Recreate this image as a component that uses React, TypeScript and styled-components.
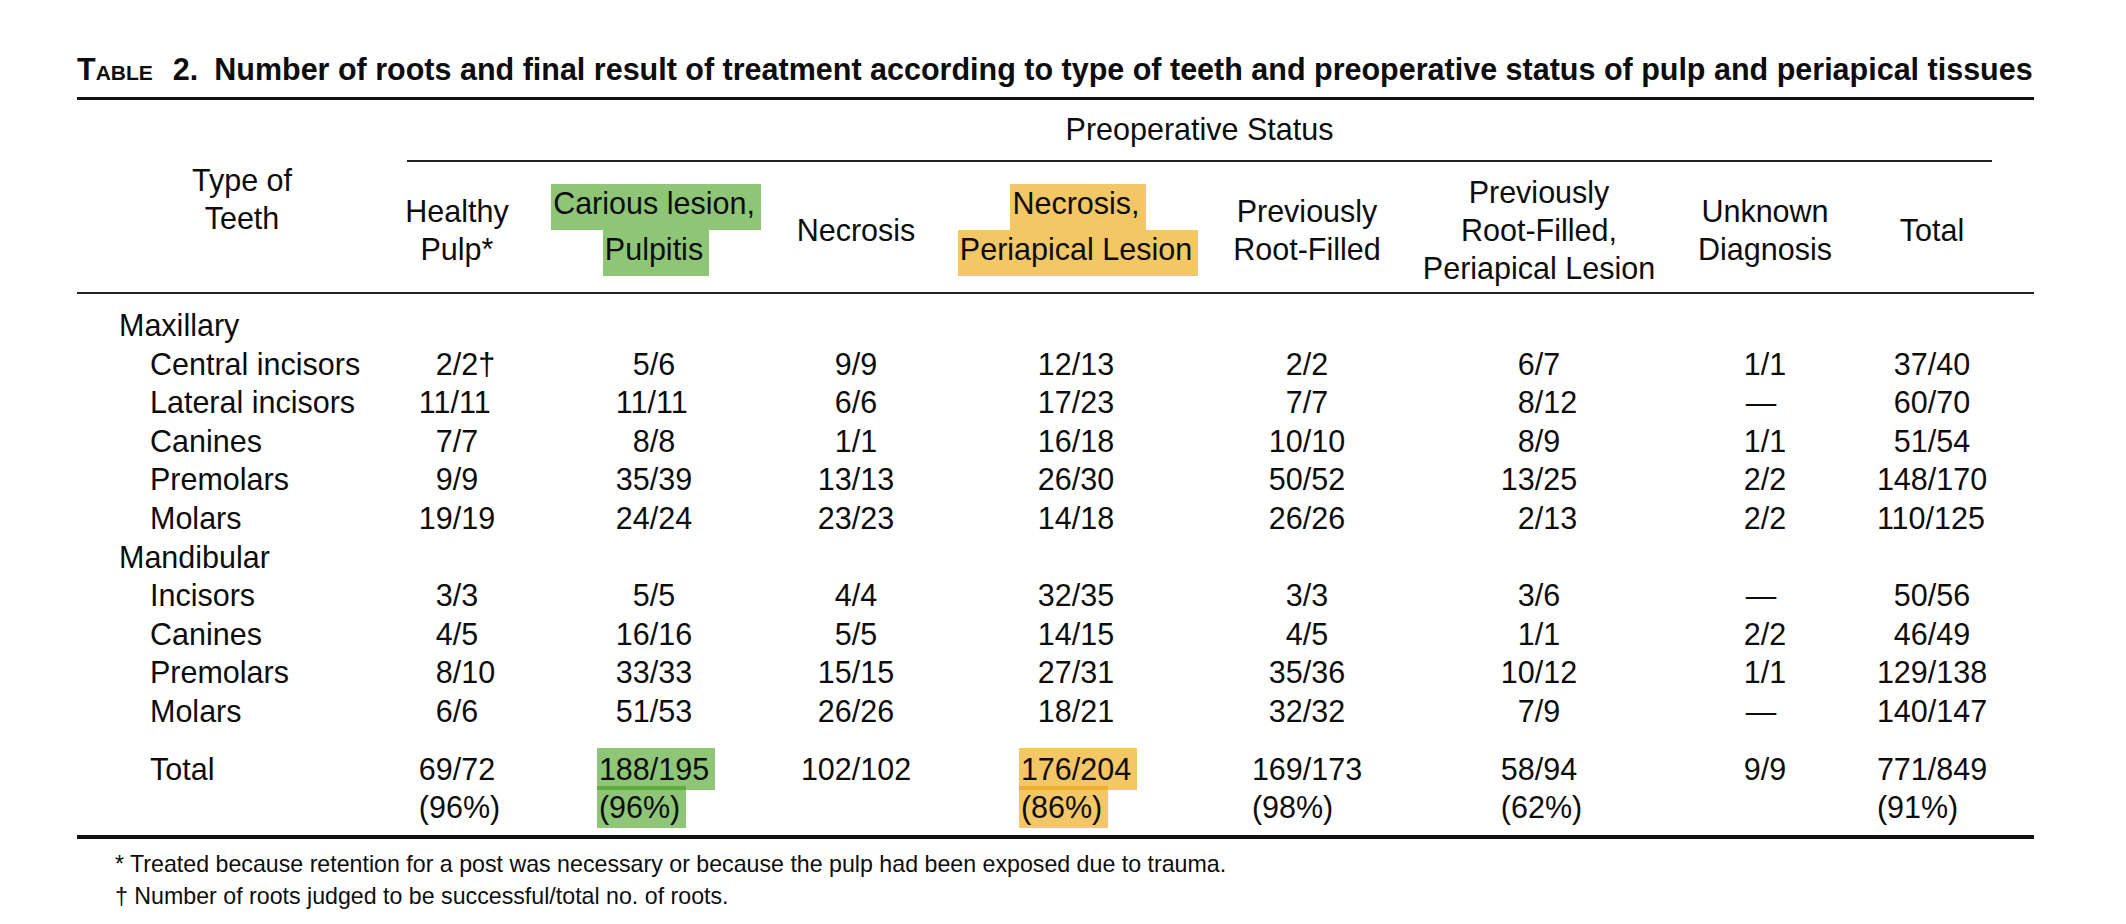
import React from 'react';
import styled, { createGlobalStyle } from 'styled-components';

const GlobalStyle = createGlobalStyle`
  html, body {
    margin: 0;
    padding: 0;
    background: #fff;
  }
  body {
    font-family: "Liberation Sans", Arial, Helvetica, sans-serif;
    color: #0d0d0d;
  }
`;

// label | 8 status columns | right gutter
const COLS = '313px 134px 260px 144px 296px 166px 298px 154px 180px 12px';

const Page = styled.div`
  width: 1957px;
  padding: 50px 0 0 77px;
`;

const Title = styled.h1`
  margin: 0;
  font-size: 30.5px;
  line-height: 38px;
  font-weight: 700;
  white-space: nowrap;
`;

const TableWord = styled.span`
  font-variant: small-caps;
  margin-right: 20px;
`;

const TableNo = styled.span`
  margin-right: 16px;
`;

const Table = styled.div`
  margin-top: 9px;
  border-top: 3px solid #111;
  border-bottom: 4px solid #111;
  font-size: 30.5px;
`;

const Grid = styled.div`
  display: grid;
  grid-template-columns: ${COLS};
`;

const Head = styled(Grid)`
  border-bottom: 2px solid #222;
  line-height: 38px;
`;

const TypeHead = styled.div`
  grid-column: 1;
  grid-row: 1 / span 2;
  display: flex;
  flex-direction: column;
  align-items: center;
  justify-content: center;
  padding: 6px 0 0 17px;
`;

const Spanner = styled.div`
  grid-column: 2 / -1;
  grid-row: 1;
  margin: 0 42px 0 17px;
  padding: 10px 0 12px;
  border-bottom: 2px solid #222;
  text-align: center;
`;

const HeadCell = styled.div`
  grid-row: 2;
  height: 130px;
  box-sizing: border-box;
  padding-top: 6px;
  display: flex;
  flex-direction: column;
  align-items: center;
  justify-content: center;
  white-space: nowrap;
`;

const Line = styled.div`
  display: flex;
  justify-content: center;
`;

const Mark = styled.span<{ $tone: 'green' | 'orange'; $tall?: boolean }>`
  background: ${p => (p.$tone === 'green' ? 'rgba(60, 155, 20, 0.58)' : 'rgba(235, 160, 0, 0.6)')};
  padding: ${p => (p.$tall ? '0 6px 8px 2px' : '4px 6px 4px 2px')};
  margin: 0 -6px 0 -2px;
`;

const Body = styled(Grid)`
  padding-top: 12px;
  grid-auto-rows: 38.6px;
  line-height: 38.6px;
`;

const Group = styled.div`
  grid-column: 1 / -1;
  padding-left: 42px;
`;

const Label = styled.div`
  grid-column: 1;
  padding-left: 73px;
  white-space: nowrap;
`;

const Value = styled.div<{ $lead: number }>`
  padding-left: calc(50% - ${p => (p.$lead * 0.556 + 0.139).toFixed(3)}em);
  white-space: nowrap;
`;

const Dash = styled.div`
  text-align: center;
  padding-right: 8px;
`;

const Totals = styled(Grid)`
  padding: 19px 0 8px;
  line-height: 38.6px;
`;

const Stack = styled.div`
  display: inline-flex;
  flex-direction: column;
  align-items: flex-start;
`;

const Notes = styled.div`
  margin-top: 9px;
  padding-left: 38px;
  font-size: 23.2px;
  line-height: 32px;
  white-space: nowrap;
`;

const heads: { lines: string[]; tone?: 'green' | 'orange' }[] = [
  { lines: ['Healthy', 'Pulp*'] },
  { lines: ['Carious lesion,', 'Pulpitis'], tone: 'green' },
  { lines: ['Necrosis'] },
  { lines: ['Necrosis,', 'Periapical Lesion'], tone: 'orange' },
  { lines: ['Previously', 'Root-Filled'] },
  { lines: ['Previously', 'Root-Filled,', 'Periapical Lesion'] },
  { lines: ['Unknown', 'Diagnosis'] },
  { lines: ['Total'] },
];

type Section = { group: string; rows: [string, string[]][] };

const sections: Section[] = [
  {
    group: 'Maxillary',
    rows: [
      ['Central incisors', ['2/2†', '5/6', '9/9', '12/13', '2/2', '6/7', '1/1', '37/40']],
      ['Lateral incisors', ['11/11', '11/11', '6/6', '17/23', '7/7', '8/12', '—', '60/70']],
      ['Canines', ['7/7', '8/8', '1/1', '16/18', '10/10', '8/9', '1/1', '51/54']],
      ['Premolars', ['9/9', '35/39', '13/13', '26/30', '50/52', '13/25', '2/2', '148/170']],
      ['Molars', ['19/19', '24/24', '23/23', '14/18', '26/26', '2/13', '2/2', '110/125']],
    ],
  },
  {
    group: 'Mandibular',
    rows: [
      ['Incisors', ['3/3', '5/5', '4/4', '32/35', '3/3', '3/6', '—', '50/56']],
      ['Canines', ['4/5', '16/16', '5/5', '14/15', '4/5', '1/1', '2/2', '46/49']],
      ['Premolars', ['8/10', '33/33', '15/15', '27/31', '35/36', '10/12', '1/1', '129/138']],
      ['Molars', ['6/6', '51/53', '26/26', '18/21', '32/32', '7/9', '—', '140/147']],
    ],
  },
];

const totals: { value: string; pct?: string; tone?: 'green' | 'orange' }[] = [
  { value: '69/72', pct: '(96%)' },
  { value: '188/195', pct: '(96%)', tone: 'green' },
  { value: '102/102' },
  { value: '176/204', pct: '(86%)', tone: 'orange' },
  { value: '169/173', pct: '(98%)' },
  { value: '58/94', pct: '(62%)' },
  { value: '9/9' },
  { value: '771/849', pct: '(91%)' },
];

const Cell = ({ v }: { v: string }) =>
  v === '—' ? <Dash>—</Dash> : <Value $lead={v.indexOf('/')}>{v}</Value>;

const TotalCell = ({ value, pct, tone }: (typeof totals)[number]) => {
  const wrap = (s: string) => (tone ? <Mark $tone={tone}>{s}</Mark> : s);
  return (
    <Value $lead={value.indexOf('/')}>
      <Stack>
        <span>{wrap(value)}</span>
        {pct && <span>{wrap(pct)}</span>}
      </Stack>
    </Value>
  );
};

export default function App() {
  return (
    <Page>
      <GlobalStyle />
      <Title>
        <TableWord>Table</TableWord>
        <TableNo>2.</TableNo>
        Number of roots and final result of treatment according to type of teeth and preoperative
        status of pulp and periapical tissues
      </Title>
      <Table>
        <Head>
          <TypeHead>
            <Line>Type of</Line>
            <Line>Teeth</Line>
          </TypeHead>
          <Spanner>Preoperative Status</Spanner>
          {heads.map((h, i) => (
            <HeadCell key={i} style={{ gridColumn: i + 2 }}>
              {h.lines.map(l => (
                <Line key={l}>
                  {h.tone ? (
                    <Mark $tone={h.tone} $tall>
                      {l}
                    </Mark>
                  ) : (
                    l
                  )}
                </Line>
              ))}
            </HeadCell>
          ))}
        </Head>
        <Body>
          {sections.map(s => (
            <React.Fragment key={s.group}>
              <Group>{s.group}</Group>
              {s.rows.map(([label, values]) => (
                <React.Fragment key={s.group + label}>
                  <Label>{label}</Label>
                  {values.map((v, i) => (
                    <Cell key={i} v={v} />
                  ))}
                  <div />
                </React.Fragment>
              ))}
            </React.Fragment>
          ))}
        </Body>
        <Totals>
          <Label>Total</Label>
          {totals.map((t, i) => (
            <TotalCell key={i} {...t} />
          ))}
        </Totals>
      </Table>
      <Notes>
        <div>* Treated because retention for a post was necessary or because the pulp had been exposed due to trauma.</div>
        <div>† Number of roots judged to be successful/total no. of roots.</div>
      </Notes>
    </Page>
  );
}
